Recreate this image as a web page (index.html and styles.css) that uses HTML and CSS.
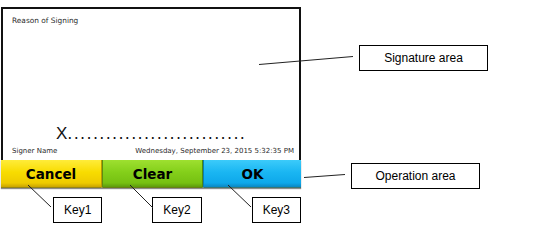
FILE: index.html
```html
<!DOCTYPE html>
<html>
<head>
<meta charset="utf-8">
<link rel="stylesheet" href="styles.css">
</head>
<body>
<div class="canvas">
  <div class="layout">
    <div class="left">
      <div class="device">
        <div class="screen">
          <div class="reason">Reason of Signing</div>
          <div class="sigline"><span class="x">X</span><span class="dots">............................</span></div>
          <div class="meta">
            <span>Signer Name</span>
            <span>Wednesday, September 23, 2015 5:32:35 PM</span>
          </div>
        </div>
        <div class="buttons">
          <div class="btn btn-cancel">Cancel</div>
          <div class="btn btn-clear">Clear</div>
          <div class="btn btn-ok">OK</div>
        </div>
      </div>
      <div class="keys">
        <div class="label key">Key1</div>
        <div class="label key">Key2</div>
        <div class="label key">Key3</div>
      </div>
    </div>
    <div class="right">
      <div class="label callout callout-sig">Signature area</div>
      <div class="label callout callout-op">Operation area</div>
    </div>
  </div>
  <svg class="leaders" width="549" height="231" viewBox="0 0 549 231">
    <line x1="259" y1="64.5" x2="353" y2="56.5"/>
    <line x1="304" y1="177.5" x2="345" y2="174.5"/>
    <line x1="28" y1="185" x2="51" y2="207"/>
    <line x1="130" y1="185" x2="153" y2="208"/>
    <line x1="228" y1="185" x2="251" y2="207"/>
  </svg>
</div>
</body>
</html>
```

FILE: styles.css
```css
html, body {
  margin: 0;
  padding: 0;
  background: #ffffff;
}

.canvas {
  position: relative;
  width: 549px;
  height: 231px;
  overflow: hidden;
  font-family: "Liberation Sans", Arial, sans-serif;
}

.layout {
  display: flex;
  flex-direction: row;
}

.left {
  display: flex;
  flex-direction: column;
  margin-left: 1px;
  width: 300px;
}

.device {
  margin-top: 7px;
  width: 300px;
  display: flex;
  flex-direction: column;
}

.screen {
  box-sizing: border-box;
  height: 153px;
  border: 2px solid #111111;
  border-bottom: none;
  display: flex;
  flex-direction: column;
  font-family: "DejaVu Sans", Verdana, sans-serif;
  color: #2a2a2a;
}

.reason {
  font-size: 7.4px;
  line-height: 8px;
  padding: 8px 0 0 9px;
}

.sigline {
  margin-top: auto;
  padding-left: 53px;
  font-size: 16px;
  line-height: 16px;
  color: #111111;
  white-space: nowrap;
}

.sigline .x {
  font-family: "Liberation Sans", Arial, sans-serif;
  font-size: 17px;
}

.sigline .dots {
  letter-spacing: 1.3px;
}

.meta {
  display: flex;
  justify-content: space-between;
  font-size: 7px;
  line-height: 8px;
  padding: 5px 5px 5px 9px;
  color: #2a2a2a;
}

.buttons {
  display: flex;
  height: 28px;
  box-shadow: 0 1px 1px rgba(0, 0, 0, 0.45);
}

.btn {
  display: flex;
  align-items: center;
  justify-content: center;
  font-family: "DejaVu Sans", Verdana, sans-serif;
  font-weight: bold;
  font-size: 13.5px;
  color: #000000;
  box-sizing: border-box;
  border-bottom: 1px solid rgba(60, 50, 0, 0.55);
}

.btn-cancel {
  width: 101px;
  background: linear-gradient(#ffec3a 0%, #f8dc00 45%, #eecb00 85%, #c9a400 100%);
  border-right: 1px solid #b99c00;
}

.btn-clear {
  width: 101px;
  background: linear-gradient(#9ee030 0%, #84cf1a 45%, #76c012 85%, #5c9a0c 100%);
  border-left: 1px solid #5e8c12;
  border-right: 1px solid #4e8a10;
}

.btn-ok {
  width: 98px;
  background: linear-gradient(#3ccbfa 0%, #1ab6f2 45%, #0ea8ea 85%, #0a86c2 100%);
  border-left: 1px solid #0a7fb5;
}

.label {
  box-sizing: border-box;
  border: 1px solid #000000;
  height: 26px;
  display: flex;
  align-items: center;
  justify-content: center;
  font-family: "Liberation Sans", Arial, sans-serif;
  font-size: 12px;
  color: #000000;
  background: #ffffff;
}

.keys {
  display: flex;
  gap: 50px;
  margin-top: 9px;
  padding-left: 52px;
}

.key {
  width: 51px;
}

.right {
  display: flex;
  flex-direction: column;
}

.callout {
  width: 129px;
}

.callout-sig {
  margin-top: 45px;
  margin-left: 58px;
}

.callout-op {
  margin-top: 92px;
  margin-left: 50px;
}

.leaders {
  position: absolute;
  left: 0;
  top: 0;
  pointer-events: none;
}

.leaders line {
  stroke: #222222;
  stroke-width: 1;
}
```
